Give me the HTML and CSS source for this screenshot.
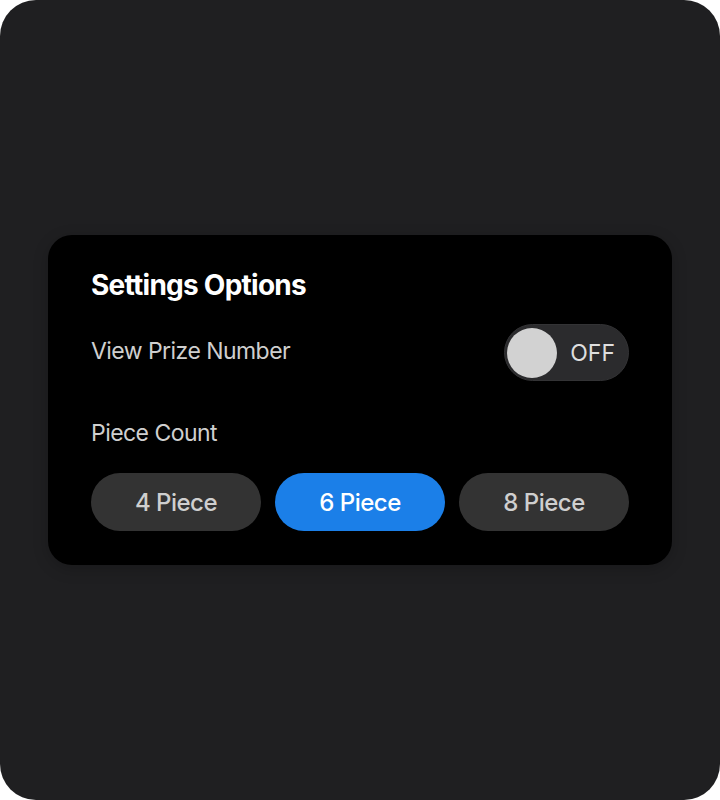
FILE: index.html
```html
<!DOCTYPE html>
<html lang="en">
<head>
<meta charset="utf-8">
<title>Settings Options</title>
<link rel="stylesheet" href="styles.css">
</head>
<body>
<div class="app">
  <section class="card">
    <h1 class="title">Settings Options</h1>
    <div class="row">
      <span class="label">View Prize Number</span>
      <button class="toggle" type="button">
        <span class="knob"></span>
        <span class="toggle-text">OFF</span>
      </button>
    </div>
    <div class="label section-label">Piece Count</div>
    <div class="choices">
      <button class="choice" type="button">4 Piece</button>
      <button class="choice active" type="button">6 Piece</button>
      <button class="choice" type="button">8 Piece</button>
    </div>
  </section>
</div>
</body>
</html>
```

FILE: styles.css
```css
html, body {
  margin: 0;
  padding: 0;
  background: #ffffff;
}

body {
  font-family: "Inter", "Noto Sans", sans-serif;
}

.app {
  width: 720px;
  height: 800px;
  background: #1f1f21;
  border-radius: 36px;
  display: flex;
  align-items: center;
  justify-content: center;
}

.card {
  width: 624px;
  box-sizing: border-box;
  background: #000000;
  border-radius: 24px;
  padding: 33px 43px 34px;
  box-shadow: 0 4px 16px rgba(0, 0, 0, 0.2);
}

.title {
  margin: 0;
  font-size: 28px;
  line-height: 34px;
  font-weight: 700;
  color: #ffffff;
  letter-spacing: -0.75px;
}

.row {
  margin-top: 22px;
  display: flex;
  align-items: center;
  justify-content: space-between;
  height: 57px;
}

.label {
  font-size: 23px;
  line-height: 28px;
  color: #cfcfcf;
  font-weight: 400;
  letter-spacing: -0.55px;
}

.row .label {
  margin-top: -3px;
}

.section-label {
  margin-top: 38px;
}

.toggle {
  width: 125px;
  height: 57px;
  box-sizing: border-box;
  border-radius: 29px;
  background: #2b2b2d;
  border: 1px solid #333335;
  padding: 0 13px 0 2px;
  display: flex;
  align-items: center;
  justify-content: space-between;
  font-family: inherit;
}

.knob {
  width: 50px;
  height: 50px;
  border-radius: 50%;
  background: #d2d2d2;
}

.toggle-text {
  font-size: 23px;
  color: #dedede;
  font-weight: 400;
}

.choices {
  margin-top: 26px;
  display: grid;
  grid-template-columns: repeat(3, 1fr);
  gap: 14px;
}

.choice {
  height: 58px;
  border: none;
  border-radius: 29px;
  background: #333333;
  color: #cfcfcf;
  font-family: inherit;
  font-size: 24px;
  font-weight: 500;
  letter-spacing: -0.5px;
}

.choice.active {
  background: #1b7fe8;
  color: #ffffff;
}
```
